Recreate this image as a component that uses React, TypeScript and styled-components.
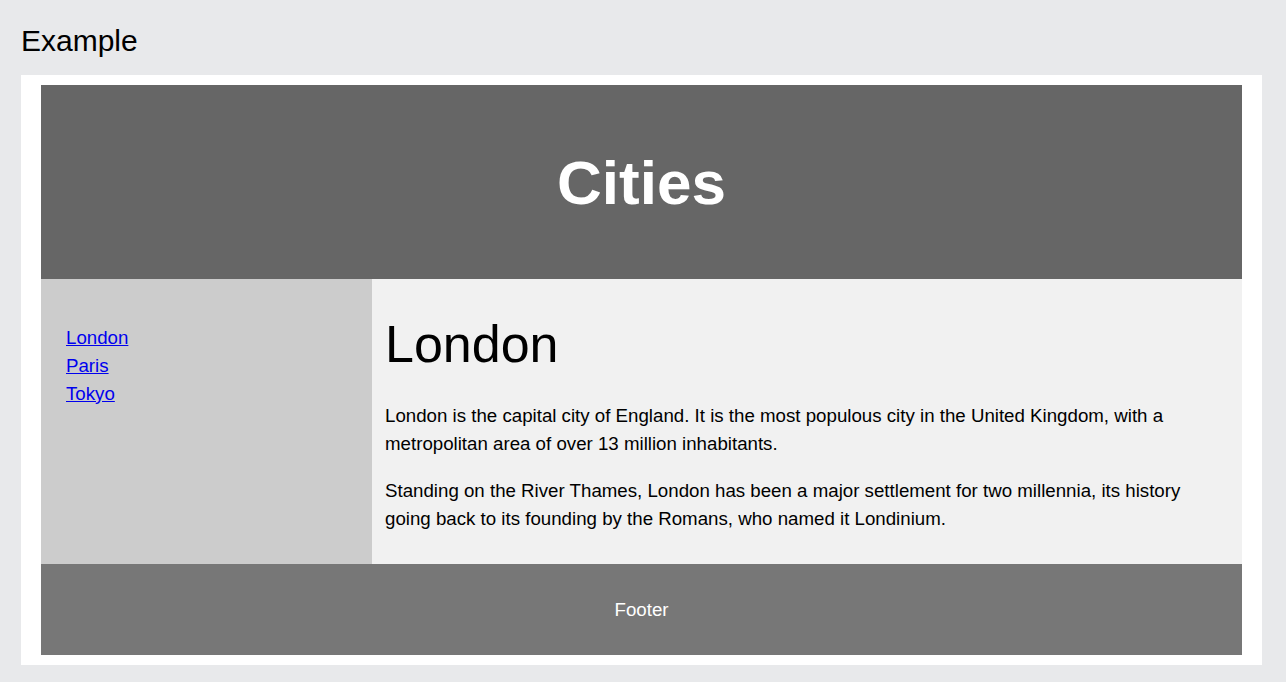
import React from "react";
import styled, { createGlobalStyle } from "styled-components";

const Global = createGlobalStyle`
  html, body { margin: 0; padding: 0; }
  body {
    background: #e8e9eb;
    font-family: "Liberation Sans", Arial, sans-serif;
    color: #000;
  }
`;

const Page = styled.div`
  padding: 23px 24px 17px 21px;
  display: flex;
  flex-direction: column;
`;

const Title = styled.h2`
  margin: 0 0 17px 0;
  font-size: 30px;
  font-weight: normal;
  line-height: 35px;
`;

const Frame = styled.div`
  background: #fff;
  padding: 10px 20px;
  display: flex;
  flex-direction: column;
`;

const Header = styled.header`
  background: #666;
  height: 194px;
  display: flex;
  align-items: center;
  justify-content: center;
  color: #fff;
  font-size: 62px;
  font-weight: bold;
`;

const Body = styled.section`
  display: flex;
  height: 285px;
`;

const Nav = styled.nav`
  width: 331px;
  flex: none;
  background: #ccc;
  padding: 45px 25px 0 25px;
  box-sizing: border-box;
`;

const NavList = styled.ul`
  list-style: none;
  margin: 0;
  padding: 0;
  display: flex;
  flex-direction: column;
  align-items: flex-start;
`;

const NavLink = styled.a`
  color: #0000ee;
  text-decoration: underline;
  font-size: 18.7px;
  line-height: 28px;
`;

const Article = styled.article`
  flex: 1;
  background: #f1f1f1;
  padding: 35px 12px 0 13px;
  box-sizing: border-box;
`;

const Heading = styled.h1`
  margin: 0 0 28px 0;
  font-size: 52px;
  font-weight: normal;
  line-height: 60px;
`;

const Para = styled.p`
  margin: 0 0 19px 0;
  font-size: 18.7px;
  line-height: 28px;
`;

const Footer = styled.footer`
  background: #777;
  height: 91px;
  display: flex;
  align-items: center;
  justify-content: center;
  color: #fff;
  font-size: 18.7px;
`;

export default function App() {
  const cities = ["London", "Paris", "Tokyo"];
  return (
    <>
      <Global />
      <Page>
        <Title>Example</Title>
        <Frame>
          <Header>Cities</Header>
          <Body>
            <Nav>
              <NavList>
                {cities.map((c) => (
                  <li key={c}>
                    <NavLink href="#">{c}</NavLink>
                  </li>
                ))}
              </NavList>
            </Nav>
            <Article>
              <Heading>London</Heading>
              <Para>
                London is the capital city of England. It is the most populous
                city in the United Kingdom, with a metropolitan area of over 13
                million inhabitants.
              </Para>
              <Para>
                Standing on the River Thames, London has been a major settlement
                for two millennia, its history going back to its founding by the
                Romans, who named it Londinium.
              </Para>
            </Article>
          </Body>
          <Footer>Footer</Footer>
        </Frame>
      </Page>
    </>
  );
}
